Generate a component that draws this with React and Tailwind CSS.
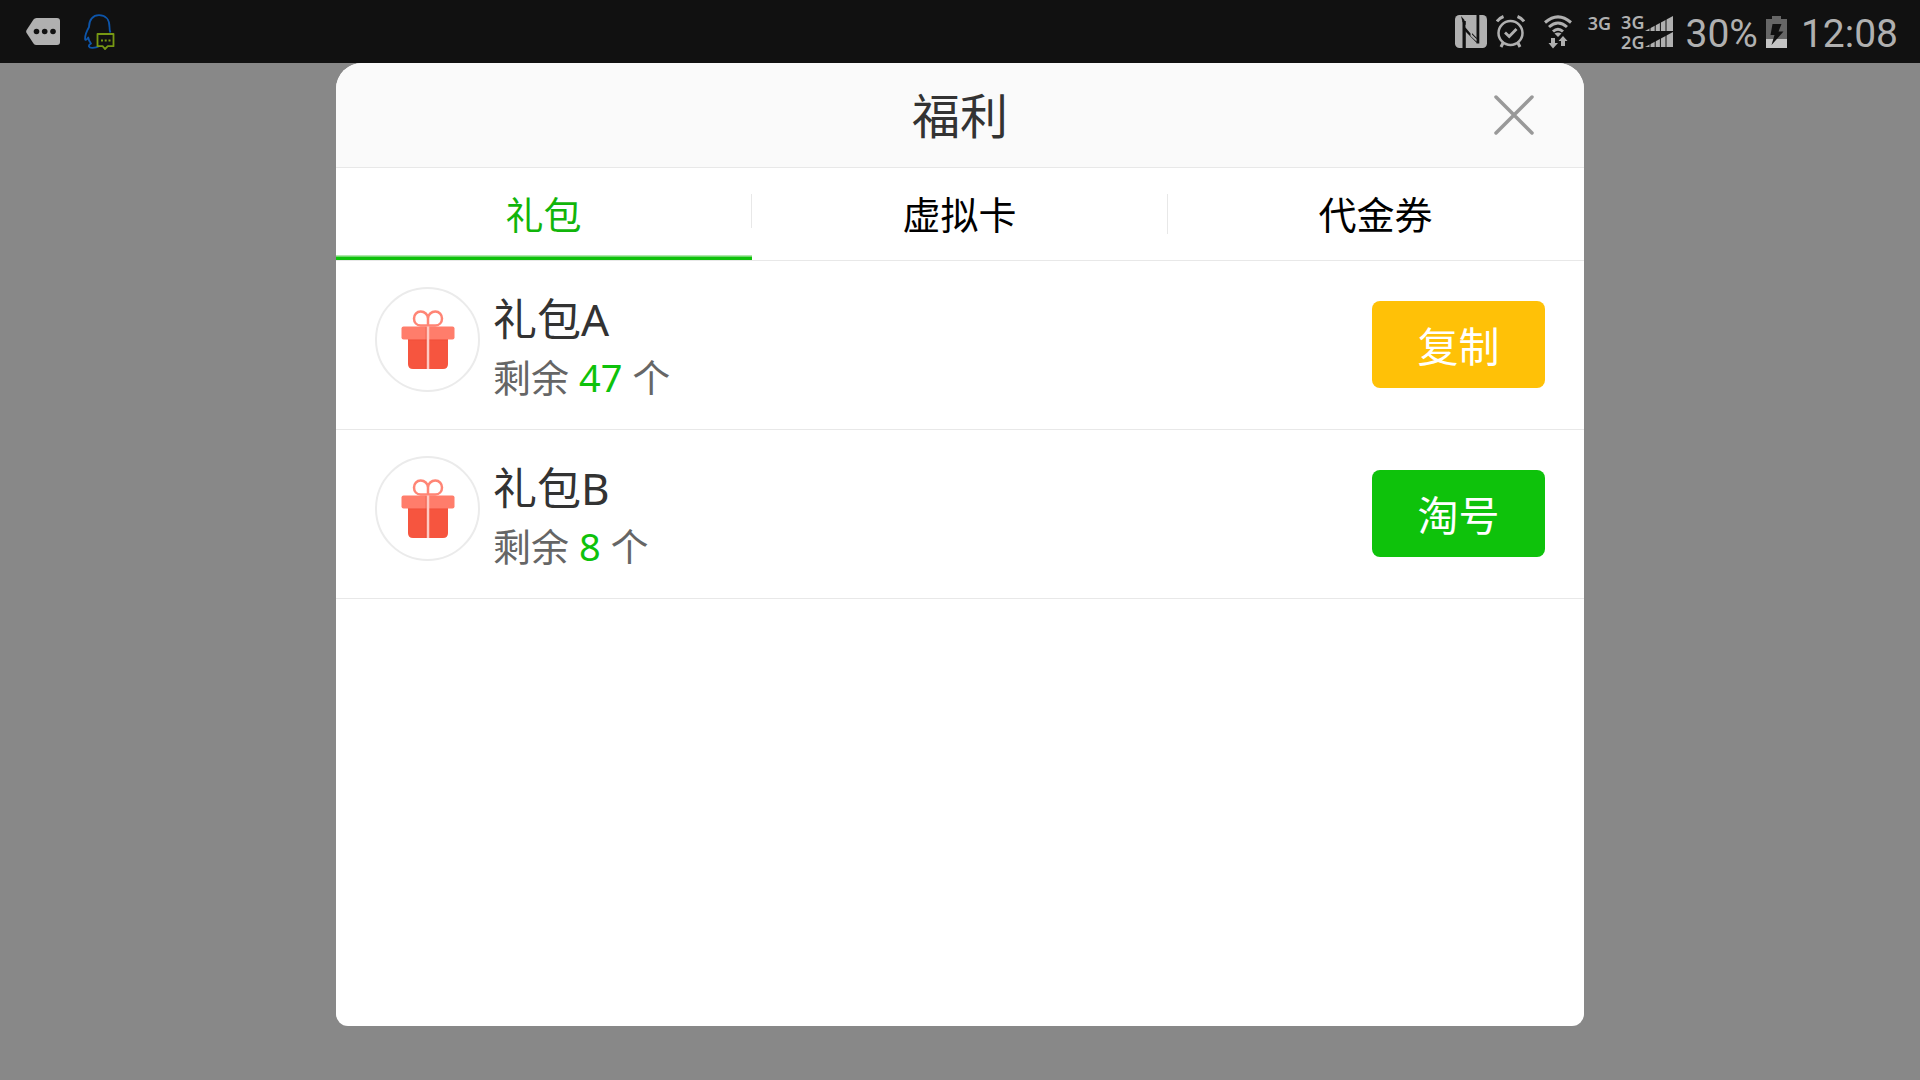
import React, { useState } from "react";

const STATUS = "#b0b0b0";

function MessageIcon() {
  return (
    <svg width="34" height="27" viewBox="0 0 34 27" aria-hidden="true">
      <path d="M10.5 0H31Q34 0 34 3V24Q34 27 31 27H10.5Q8.500 27 7.500 25.500L0.600 15Q-0.300 13.500 0.600 12L7.500 1.500Q8.500 0 10.500 0Z" fill={STATUS} />
      <circle cx="10.500" cy="13.500" r="2.800" fill="#111" />
      <circle cx="18.700" cy="13.500" r="2.800" fill="#111" />
      <circle cx="27" cy="13.500" r="2.800" fill="#111" />
    </svg>
  );
}

function PenguinIcon() {
  return (
    <svg width="32" height="36" viewBox="0 0 32 36" fill="none" aria-hidden="true">
      <path
        d="M26.500 18.500C25.500 17 25.500 15.500 25.500 13C25.500 5 21 1.200 15 1.200C9 1.200 5 5.500 5 13C2.500 17.500 0.500 21 1.200 25.500C2.200 26.500 3.500 24.500 4.200 23.500C4.600 26 5.600 28 7 29.500C3.500 31.500 4.500 34 8.500 33.800C11 33.800 13 33.500 14.500 32.500"
        stroke="#0d55aa"
        strokeWidth="1.800"
        strokeLinejoin="round"
      />
      <path d="M13.500 20H29.500V32.200H23.800L21 35L18.600 32.200H13.500Z" fill="#111" stroke="#779813" strokeWidth="1.800" strokeLinejoin="round" />
      <path d="M17 26.500h2M20.700 26.500h2M24.500 26.500h2" stroke="#779813" strokeWidth="2" />
    </svg>
  );
}

function NfcIcon() {
  return (
    <svg width="32" height="33" viewBox="0 0 32 33" aria-hidden="true">
      <rect width="32" height="33" rx="4.500" fill={STATUS} />
      <path d="M7 0L7.500 5V33H10.800V15.500L21.500 27.500V28.500L25 33V5.500L24.500 0H21.500V20.500L10.500 8V5.500Z" fill="none" />
      <path d="M7.500 6V33H10.800V6Z" fill="#111" />
      <path d="M21.500 0H24.300V28.500H21.500Z" fill="#111" />
      <path d="M9.500 10.500L21.800 23V28L9.500 15.500Z" fill="#111" />
      <path d="M10.500 9.500V12.500L15.500 18.500V21L21.500 26.500V24L17 19.500V17Z" fill={STATUS} />
      <path d="M6 1L9.500 5V9L7.500 7Z" fill="#111" />
    </svg>
  );
}

function AlarmIcon() {
  return (
    <svg width="29" height="33" viewBox="0 0 29 33" fill="none" stroke={STATUS} strokeWidth="2.500" aria-hidden="true">
      <circle cx="14.500" cy="18" r="12" />
      <path d="M9 17.500L13.200 21.500L20.500 14" strokeWidth="2.800" />
      <path d="M1 6.500Q3.500 3 7.500 1.500M28 6.500Q25.500 3 21.500 1.500" strokeWidth="3" />
      <path d="M7 28L5 32M22 28L24 32" strokeWidth="3" />
    </svg>
  );
}

function WifiIcon() {
  return (
    <svg width="28" height="34" viewBox="0 0 28 34" fill="none" aria-hidden="true">
      <g stroke={STATUS} strokeWidth="3">
        <path d="M1 7.500Q14 -3.800 27 7.500" />
        <path d="M5 12Q14 4 23 12" />
        <path d="M9 16.500Q14 12 19 16.500" />
      </g>
      <path d="M10.500 18.500Q14 16.500 17.500 18.500L14 22Z" fill={STATUS} />
      <path d="M7 23H11V28H14L9 33.500L4.500 28H7Z" fill={STATUS} />
      <path d="M17 31V26H14.500L19 21L23.500 26H21V31Z" fill={STATUS} />
    </svg>
  );
}

function SignalIcon() {
  return (
    <svg width="28" height="15" viewBox="0 0 28 15" aria-hidden="true">
      <path d="M0 15L28 0V15Z" fill={STATUS} />
      <path d="M5 8V15M10.200 6V15M15.400 3V15M21 1V15" stroke="#111" strokeWidth="1" />
    </svg>
  );
}

function BatteryIcon() {
  return (
    <svg width="21" height="32" viewBox="0 0 21 32" aria-hidden="true">
      <path d="M6 0H15V3H21V23H0V3H6Z" fill="#666" />
      <path d="M0 23H21V32H0Z" fill="#c4c4c4" />
      <path d="M6.500 8H15.500L12.500 15.500H17.500L5.500 29L8.500 19H4.500Z" fill="#111" />
    </svg>
  );
}

function GiftIcon() {
  return (
    <svg width="54" height="60" viewBox="0 0 54 60" fill="none" aria-hidden="true">
      <path
        d="M27 16V8.500C27 4.500 23.500 1.500 19.700 1.500C15.700 1.500 13 4.700 13 8.500C13 12.500 15.700 15.500 19.700 15.500H34.300C38.300 15.500 41 12.500 41 8.500C41 4.700 38.300 1.500 34.300 1.500C30.500 1.500 27 4.500 27 8.500"
        stroke="#ff8575"
        strokeWidth="2.500"
      />
      <path d="M7 28H47V54Q47 59 42 59H12Q7 59 7 54Z" fill="#f6553f" />
      <path d="M7 29.500H47" stroke="#ee4b37" strokeWidth="1.500" />
      <rect x="0.500" y="16.500" width="53" height="13" rx="2" fill="#ff7d6b" />
      <path d="M24.500 17H27V59H24.500Z" fill="#d8402f" opacity="0.350" />
      <path d="M27 16.500V59" stroke="#ffc9c2" strokeWidth="2.500" />
    </svg>
  );
}

function StatusBar() {
  return (
    <div className="flex h-[63px] items-center justify-between bg-[#111111] pr-[22px] pl-[26px] text-[#b0b0b0]">
      <div className="flex items-center gap-6">
        <MessageIcon />
        <PenguinIcon />
      </div>
      <div className="flex items-center font-[Roboto,sans-serif]">
        <NfcIcon />
        <div className="ml-[9px] flex items-center gap-[19px]">
          <AlarmIcon />
          <WifiIcon />
        </div>
        <div className="ml-4 flex gap-[10px] font-['Noto_Sans',sans-serif] text-[18px] leading-5 font-semibold">
          <span className="pt-px">3G</span>
          <div className="flex flex-col">
            <span>3G</span>
            <span>2G</span>
          </div>
        </div>
        <div className="ml-px flex flex-col gap-[1px]">
          <SignalIcon />
          <SignalIcon />
        </div>
        <span className="mt-1 ml-3 text-[39px] leading-[46px]">30%</span>
        <div className="mr-[14px] ml-2">
          <BatteryIcon />
        </div>
        <span className="mt-1 text-[39px] leading-[46px]">12:08</span>
      </div>
    </div>
  );
}

const TABS = [
  { label: "礼包", divider: "h-[34px] bg-[#e8e8e8]" },
  { label: "虚拟卡", divider: "h-10 bg-[#e8e8e8]" },
  { label: "代金券", divider: "h-10 bg-white" },
];

const GIFTS = [
  { name: "礼包A", left: 47, action: "复制", color: "bg-[#ffc107]" },
  { name: "礼包B", left: 8, action: "淘号", color: "bg-[#0ec20b]" },
];

function GiftRow({ gift }) {
  return (
    <li className="flex items-start border-b border-[#e8e8e8] px-[39px] pt-[26px] pb-7">
      <div className="flex size-[105px] shrink-0 items-center justify-center rounded-full border-2 border-[#ebebeb]">
        <GiftIcon />
      </div>
      <div className="ml-[13px] grow pt-2">
        <h2 className="text-[44px] leading-[48px] text-[#333333]">{gift.name}</h2>
        <p className="mt-[10px] text-[38px] leading-[48px] text-[#666666]">
          剩余 <span className="text-[#0ec20b]">{gift.left}</span> 个
        </p>
      </div>
      <button type="button" className={`mt-[14px] h-[87px] w-[173px] rounded-lg pt-1 text-[41px] text-white ${gift.color}`}>
        {gift.action}
      </button>
    </li>
  );
}

export default function App() {
  const [active, setActive] = useState(0);
  return (
    <div className="flex min-h-screen flex-col bg-[#888888] font-['Noto_Sans','Noto_Sans_CJK_SC',sans-serif]">
      <StatusBar />
      <main className="mx-auto mb-[54px] flex w-[65%] grow flex-col overflow-hidden rounded-t-[26px] rounded-b-xl bg-white">
        <header className="grid h-[105px] grid-cols-[1fr_auto_1fr] items-center border-b border-[#e8e8e8] bg-[#fafafa] px-[49px]">
          <h1 className="col-start-2 pt-0.5 text-[48px] leading-[64px] text-[#333333]">福利</h1>
          <button type="button" aria-label="关闭" className="justify-self-end">
            <svg width="42" height="42" viewBox="0 0 42 42" stroke="#999999" strokeWidth="3.500" strokeLinecap="round" aria-hidden="true">
              <path d="M3 3L39 39M39 3L3 39" />
            </svg>
          </button>
        </header>
        <nav role="tablist" className="grid grid-cols-3 border-b border-[#e8e8e8]">
          {TABS.map((tab, i) => (
            <button
              key={tab.label}
              type="button"
              role="tab"
              aria-selected={i === active}
              onClick={() => setActive(i)}
              className={`flex h-[92px] flex-col text-[38px] ${i === active ? "text-[#11b50a]" : "text-black"}`}
            >
              <span className="flex w-full grow items-start">
                <span className="grow pt-[18px]">{tab.label}</span>
                <span className={`mt-[26px] w-px ${tab.divider}`} />
              </span>
              <span className={`h-[5px] w-full ${i === active ? "bg-linear-to-b from-[#c9f1c8] to-[#0ec20b] to-50%" : "bg-white"}`} />
            </button>
          ))}
        </nav>
        <ul>
          {GIFTS.map((gift) => (
            <GiftRow key={gift.name} gift={gift} />
          ))}
        </ul>
      </main>
    </div>
  );
}
